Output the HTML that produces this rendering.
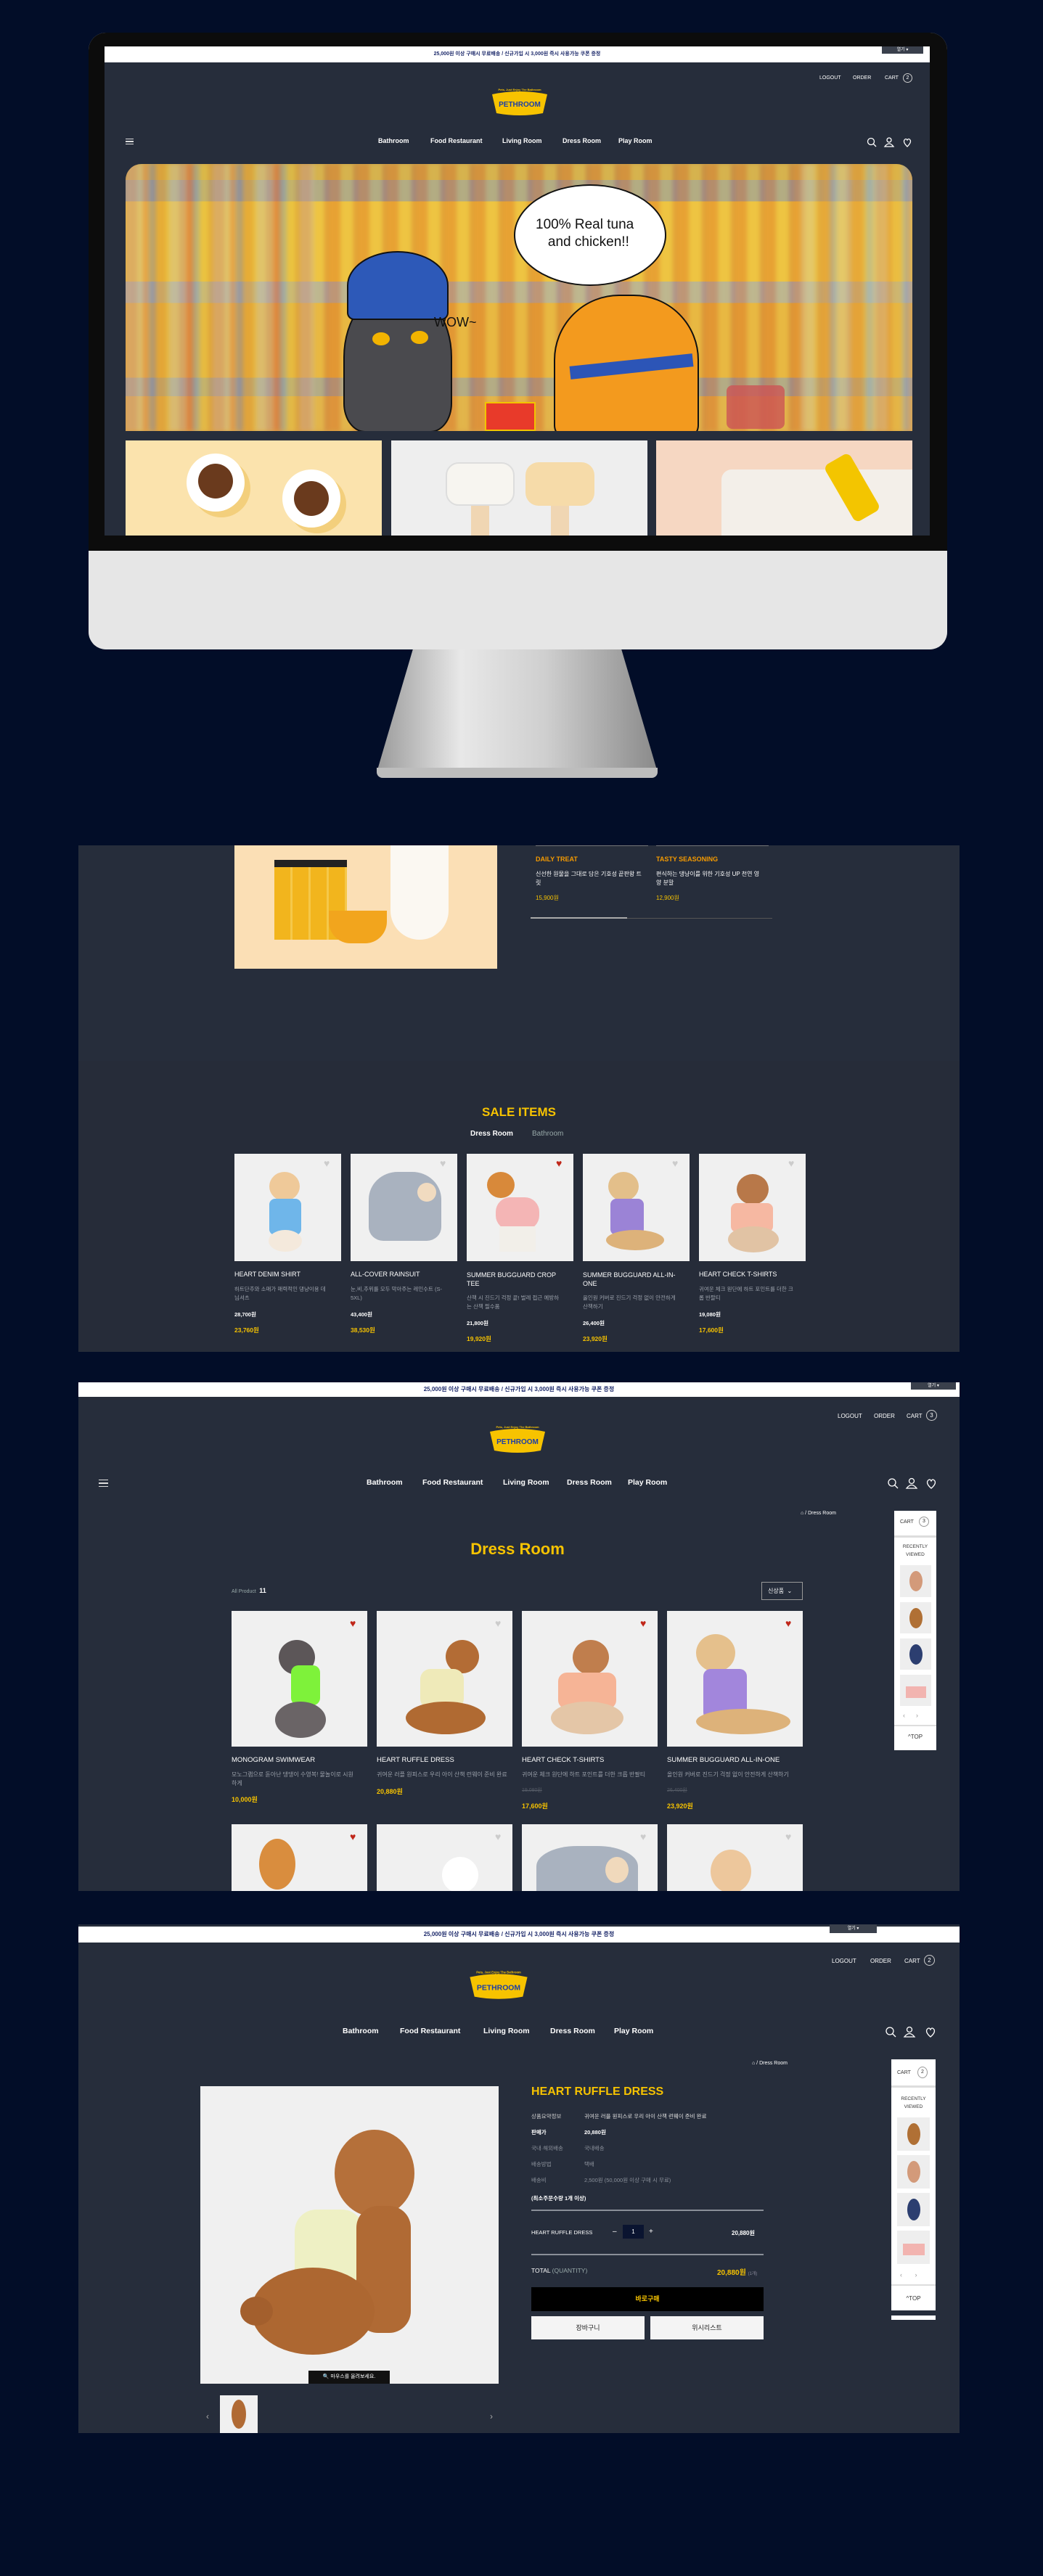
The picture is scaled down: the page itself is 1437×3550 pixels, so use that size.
<!DOCTYPE html>
<html><head><meta charset="utf-8">
<style>
*{margin:0;padding:0;box-sizing:border-box}
body{width:1437px;height:3550px;background:#020d28;position:relative;overflow:hidden;font-family:"Liberation Sans","Noto Sans CJK KR",sans-serif;color:#fff}
.a{position:absolute}
.panel{background:#262d3b}
.wbar{background:#fff;color:#1d2a6b;font-size:8px;text-align:center;font-weight:bold}
.nav span{position:absolute;font-weight:bold;white-space:nowrap}
.t{position:absolute;white-space:nowrap}
.y{color:#f7c300}
.card{position:absolute;background:#f0f0f0;overflow:hidden}
.dog{position:absolute;border-radius:50%}
.heart{position:absolute;font-size:14px;line-height:1}
.k{font-family:"Liberation Sans","Noto Sans CJK KR",sans-serif}
</style></head><body>

<!-- ============ SECTION 1: MONITOR ============ -->
<div class="a" style="left:519px;top:880px;width:387px;height:192px;background:linear-gradient(90deg,#9a9a9a,#e8e8e8 30%,#cfcfcf 60%,#8a8a8a);clip-path:polygon(14% 0,86% 0,100% 96%,0 96%);border-radius:0 0 10px 10px"></div>
<div class="a" style="left:519px;top:1058px;width:387px;height:14px;background:#bdbdbd;border-radius:0 0 8px 8px"></div>
<div class="a" style="left:122px;top:45px;width:1183px;height:850px;background:#e6e6e6;border-radius:24px;"></div>
<div class="a" style="left:122px;top:45px;width:1183px;height:714px;background:#0c0c0c;border-radius:24px 24px 0 0"></div>
<div class="a" style="left:144px;top:64px;width:1137px;height:674px;background:#262d3b;overflow:hidden">
  <div class="a wbar" style="left:0;top:0;width:1137px;height:22px;line-height:22px;font-size:7px">25,000원 이상 구매시 무료배송 / 신규가입 시 3,000원 즉시 사용가능 쿠폰 증정</div>
  <div class="a" style="left:1071px;top:0;width:57px;height:10px;background:#3a404c;font-size:6px;text-align:center;line-height:10px">열기 ▾</div>
  <div class="t" style="left:985px;top:40px;font-size:7px">LOGOUT</div>
  <div class="t" style="left:1031px;top:40px;font-size:7px">ORDER</div>
  <div class="t" style="left:1075px;top:40px;font-size:7px">CART</div>
  <div class="a" style="left:1100px;top:37px;width:13px;height:13px;border:1px solid #ccc;border-radius:50%;font-size:7px;text-align:center;line-height:11px">2</div>
  <svg class="a" style="left:530px;top:52px" width="84" height="48" viewBox="0 0 84 48"><path d="M4 14 Q42 6 80 14 L74 40 Q42 46 10 40 Z" fill="#f7c300"/><text x="42" y="31" font-size="10" font-weight="bold" fill="#1b3ea8" text-anchor="middle" font-family="Liberation Sans">PETHROOM</text><text x="42" y="9" font-size="4" font-weight="bold" fill="#f7c300" text-anchor="middle" font-family="Liberation Sans">Pets, Just Enjoy The Bathroom</text></svg>
  <div class="a" style="left:29px;top:127px;width:11px;height:8px;border-top:1.5px solid #ddd;border-bottom:1.5px solid #ddd"></div>
  <div class="a" style="left:29px;top:130px;width:11px;height:1.5px;background:#ddd"></div>
  <div class="nav" style="font-size:9px">
   <span style="left:377px;top:125px">Bathroom</span><span style="left:449px;top:125px">Food Restaurant</span><span style="left:548px;top:125px">Living Room</span><span style="left:631px;top:125px">Dress Room</span><span style="left:708px;top:125px">Play Room</span>
  </div>
  <svg class="a" style="left:1050px;top:125px" width="70" height="14" viewBox="0 0 70 14" fill="none" stroke="#fff" stroke-width="1.3"><circle cx="6" cy="6" r="4.5"/><path d="M9 9l4 4"/><circle cx="31" cy="4" r="3"/><path d="M25 13q6-8 12 0z"/><path d="M56 4q-2-3-4 0-2 3 4 9 6-6 4-9-2-3-4 0z"/></svg>
  <!-- hero -->
  <div class="a" style="left:29px;top:162px;width:1084px;height:368px;border-radius:22px 22px 0 0;overflow:hidden;background:
    linear-gradient(180deg,#c9a24a 0 6%,#9a9890 6% 14%,#e8b93a 14% 44%,#a9a7a0 44% 52%,#e0a83a 52% 80%,#9b9993 80% 87%,#d9a446 87%)">
    <div class="a" style="left:0;top:0;width:1084px;height:368px;background:repeating-linear-gradient(90deg,rgba(230,120,40,.35) 0 16px,rgba(255,230,90,.25) 16px 34px,rgba(200,60,40,.18) 34px 40px);filter:blur(3px)"></div>
    <div class="a" style="left:0;top:0;width:260px;height:368px;background:repeating-linear-gradient(90deg,#c9c3b5 0 24px,#d96a4a 24px 32px,#6f9fcf 32px 42px,#e6c23e 42px 60px);opacity:.35;filter:blur(3px)"></div>
    <div class="a" style="left:930px;top:0;width:154px;height:368px;background:repeating-linear-gradient(90deg,#d8cfa2 0 20px,#e7b540 20px 40px,#8fb7d8 40px 50px);opacity:.4;filter:blur(3px)"></div>
    <div class="a" style="left:535px;top:28px;width:210px;height:140px;background:#fff;border:2px solid #111;border-radius:50%"></div>
    <div class="t" style="left:565px;top:72px;font-size:19px;color:#111;text-align:center;line-height:24px">100% Real tuna<br>&nbsp;&nbsp;and chicken!!</div>
    <!-- grey cat -->
    <div class="a" style="left:300px;top:170px;width:150px;height:200px;background:#4a4a4e;border-radius:48% 48% 20% 20%;border:2px solid #111"></div>
    <div class="a" style="left:305px;top:120px;width:140px;height:95px;background:#2d59b8;border-radius:50% 50% 10px 10px;border:2px solid #111"></div>
    <div class="a" style="left:340px;top:232px;width:24px;height:18px;background:#f2b300;border-radius:50%"></div>
    <div class="a" style="left:393px;top:230px;width:24px;height:18px;background:#f2b300;border-radius:50%"></div>
    <div class="t" style="left:425px;top:208px;font-size:18px;color:#111">WOW~</div>
    <!-- orange cat -->
    <div class="a" style="left:590px;top:180px;width:200px;height:200px;background:#f39a1e;border-radius:45% 45% 10% 10%;border:2px solid #111"></div>
    <div class="a" style="left:612px;top:270px;width:170px;height:18px;background:#2c55b7;transform:rotate(-6deg)"></div>
    <div class="a" style="left:495px;top:328px;width:70px;height:40px;background:#e83a2a;border:2px solid #f2c400"></div>
    <div class="a" style="left:828px;top:305px;width:80px;height:60px;background:#c55;border-radius:8px;opacity:.8"></div>
  </div>
  <!-- three tiles -->
  <div class="a" style="left:29px;top:543px;width:353px;height:131px;background:#fbe3ad">
    <div class="dog" style="left:84px;top:18px;width:80px;height:80px;background:#fff;box-shadow:8px 8px 0 #f3cf7c"></div><div class="dog" style="left:100px;top:32px;width:48px;height:48px;background:#6a3a1d"></div>
    <div class="dog" style="left:216px;top:40px;width:80px;height:80px;background:#fff;box-shadow:8px 8px 0 #f3cf7c"></div><div class="dog" style="left:232px;top:56px;width:48px;height:48px;background:#6a3a1d"></div>
  </div>
  <div class="a" style="left:395px;top:543px;width:353px;height:131px;background:#eeeeee">
    <div class="a" style="left:75px;top:30px;width:95px;height:60px;background:#f7f5f0;border-radius:18px;border:2px solid #ddd"></div>
    <div class="a" style="left:185px;top:30px;width:95px;height:60px;background:#f6dba9;border-radius:18px"></div>
    <div class="a" style="left:110px;top:90px;width:25px;height:41px;background:#f0d6b3"></div><div class="a" style="left:220px;top:90px;width:25px;height:41px;background:#f0d6b3"></div>
  </div>
  <div class="a" style="left:760px;top:543px;width:353px;height:131px;background:#f6d7c2">
    <div class="a" style="left:90px;top:40px;width:263px;height:91px;background:#f3efe9;border-radius:14px 0 0 0"></div>
    <div class="a" style="left:250px;top:20px;width:40px;height:90px;background:#f3c500;border-radius:8px;transform:rotate(-30deg)"></div>
  </div>
</div>

<!-- ============ SECTION 2 ============ -->
<div class="a panel" style="left:108px;top:1165px;width:1214px;height:698px">
  <div class="a" style="left:0;top:297px;width:1214px;height:401px;background:#262c39"></div>
  <div class="a" style="left:215px;top:0;width:362px;height:170px;background:#fbdfb5">
    <div class="a" style="left:55px;top:20px;width:100px;height:110px;background:repeating-linear-gradient(90deg,#f2b51d 0 22px,#f5c84a 22px 25px)"></div>
    <div class="a" style="left:55px;top:20px;width:100px;height:10px;background:#222"></div>
    <div class="a" style="left:130px;top:90px;width:80px;height:45px;background:#f2a51d;border-radius:0 0 30px 30px"></div>
    <div class="a" style="left:215px;top:0;width:80px;height:130px;background:#fbf8f2;border-radius:0 0 40px 40px"></div>
  </div>
  <div class="a" style="left:630px;top:0;width:155px;height:1px;background:#777"></div>
  <div class="a" style="left:796px;top:0;width:155px;height:1px;background:#777"></div>
  <div class="t" style="left:630px;top:14px;font-size:9px;font-weight:bold;color:#f59a00">DAILY TREAT</div>
  <div class="t" style="left:796px;top:14px;font-size:9px;font-weight:bold;color:#f59a00">TASTY SEASONING</div>
  <div class="t k" style="left:630px;top:34px;font-size:8px;line-height:12px">신선한 원물을 그대로 담은 기호성 끝판왕 트<br>릿</div>
  <div class="t k" style="left:796px;top:34px;font-size:8px;line-height:12px">편식하는 댕냥이를 위한 기호성 UP 천연 영<br>양 분말</div>
  <div class="t y" style="left:630px;top:67px;font-size:8px">15,900원</div>
  <div class="t y" style="left:796px;top:67px;font-size:8px">12,900원</div>
  <div class="a" style="left:623px;top:100px;width:333px;height:1px;background:#555"></div>
  <div class="a" style="left:623px;top:99px;width:133px;height:2px;background:#aaa"></div>
  <div class="t y" style="left:0;width:1214px;text-align:center;top:358px;font-size:17px;font-weight:bold">SALE ITEMS</div>
  <div class="t" style="left:540px;top:392px;font-size:10px;font-weight:bold">Dress Room</div>
  <div class="t" style="left:625px;top:392px;font-size:10px;color:#9aa">Bathroom</div>
</div>
<!-- sale cards -->
<div class="card" style="left:323px;top:1590px;width:147px;height:148px"><div class="dog" style="left:48px;top:25px;width:42px;height:40px;background:#efc999"></div><div class="a" style="left:48px;top:62px;width:44px;height:50px;background:#6fb6ea;border-radius:8px"></div><div class="dog" style="left:47px;top:105px;width:46px;height:30px;background:#f4e9dc"></div><div class="heart" style="left:123px;top:6px;color:#ccc">♥</div></div>
<div class="card" style="left:483px;top:1590px;width:147px;height:148px"><div class="a" style="left:25px;top:25px;width:100px;height:95px;background:#a9b2bf;border-radius:40% 40% 20% 20%"></div><div class="dog" style="left:92px;top:40px;width:26px;height:26px;background:#f1dbc0"></div><div class="heart" style="left:123px;top:6px;color:#ccc">♥</div></div>
<div class="card" style="left:643px;top:1590px;width:147px;height:148px"><div class="dog" style="left:28px;top:25px;width:38px;height:36px;background:#d8893a"></div><div class="a" style="left:40px;top:60px;width:60px;height:45px;background:#f4b5b5;border-radius:20px"></div><div class="a" style="left:45px;top:100px;width:50px;height:35px;background:#f2efe9"></div><div class="heart" style="left:123px;top:6px;color:#c0271a">♥</div></div>
<div class="card" style="left:803px;top:1590px;width:147px;height:148px"><div class="dog" style="left:35px;top:25px;width:42px;height:40px;background:#e3bf8a"></div><div class="a" style="left:38px;top:62px;width:46px;height:50px;background:#9b83d6;border-radius:8px"></div><div class="dog" style="left:32px;top:105px;width:80px;height:28px;background:#ddb27a"></div><div class="heart" style="left:123px;top:6px;color:#ccc">♥</div></div>
<div class="card" style="left:963px;top:1590px;width:147px;height:148px"><div class="dog" style="left:52px;top:28px;width:44px;height:42px;background:#b87849"></div><div class="a" style="left:44px;top:68px;width:58px;height:40px;background:#f6b8a2;border-radius:8px"></div><div class="dog" style="left:40px;top:100px;width:70px;height:36px;background:#e1c3a4"></div><div class="heart" style="left:123px;top:6px;color:#ccc">♥</div></div>
<div class="a" style="top:1751px;left:0;width:1437px;font-size:9px">
 <div class="t" style="left:323px">HEART DENIM SHIRT</div><div class="t" style="left:483px">ALL-COVER RAINSUIT</div><div class="t" style="left:643px;line-height:12px">SUMMER BUGGUARD CROP<br>TEE</div><div class="t" style="left:803px;line-height:12px">SUMMER BUGGUARD ALL-IN-<br>ONE</div><div class="t" style="left:963px">HEART CHECK T-SHIRTS</div>
</div>
<div class="a k" style="top:1771px;left:0;width:1437px;font-size:7.5px;color:#9aa0aa;line-height:12px">
 <div class="t" style="left:323px">하트단추와 소매가 매력적인 댕냥이용 데<br>님셔츠</div><div class="t" style="left:483px">눈,비,추위를 모두 막아주는 레인수트 (S-<br>5XL)</div><div class="t" style="left:643px;top:12px">산책 시 진드기 걱정 끝! 벌레 접근 예방하<br>는 산책 필수품</div><div class="t" style="left:803px;top:12px">올인원 커버로 진드기 걱정 없이 안전하게<br>산책하기</div><div class="t" style="left:963px">귀여운 체크 원단에 하트 포인트를 더한 크<br>롭 반팔티</div>
</div>
<div class="a" style="top:1806px;left:0;width:1437px;font-size:7.5px;font-weight:bold;text-decoration:line-through">
 <div class="t" style="left:323px">28,700원</div><div class="t" style="left:483px">43,400원</div><div class="t" style="left:643px;top:12px">21,800원</div><div class="t" style="left:803px;top:12px">26,400원</div><div class="t" style="left:963px">19,080원</div>
</div>
<div class="a y" style="top:1827px;left:0;width:1437px;font-size:8.5px;font-weight:bold">
 <div class="t" style="left:323px">23,760원</div><div class="t" style="left:483px">38,530원</div><div class="t" style="left:643px;top:12px">19,920원</div><div class="t" style="left:803px;top:12px">23,920원</div><div class="t" style="left:963px">17,600원</div>
</div>

<!-- ============ SECTION 3 ============ -->
<div class="a panel" style="left:108px;top:1905px;width:1214px;height:701px;overflow:hidden">
  <div class="a wbar" style="left:0;top:0;width:1214px;height:20px;line-height:20px">25,000원 이상 구매시 무료배송 / 신규가입 시 3,000원 즉시 사용가능 쿠폰 증정</div>
  <div class="a" style="left:1147px;top:0;width:62px;height:10px;background:#3a404c;font-size:6px;text-align:center;line-height:10px">열기 ▾</div>
  <div class="t" style="left:1046px;top:42px;font-size:8px">LOGOUT</div>
  <div class="t" style="left:1096px;top:42px;font-size:8px">ORDER</div>
  <div class="t" style="left:1141px;top:42px;font-size:8px">CART</div>
  <div class="a" style="left:1168px;top:38px;width:15px;height:15px;border:1px solid #ccc;border-radius:50%;font-size:8px;text-align:center;line-height:13px">3</div>
  <svg class="a" style="left:560px;top:54px" width="90" height="48" viewBox="0 0 84 48"><path d="M4 14 Q42 6 80 14 L74 40 Q42 46 10 40 Z" fill="#f7c300"/><text x="42" y="31" font-size="10" font-weight="bold" fill="#1b3ea8" text-anchor="middle" font-family="Liberation Sans">PETHROOM</text><text x="42" y="9" font-size="4" font-weight="bold" fill="#f7c300" text-anchor="middle" font-family="Liberation Sans">Pets, Just Enjoy The Bathroom</text></svg>
  <div class="a" style="left:28px;top:134px;width:13px;height:10px;border-top:1.5px solid #ddd;border-bottom:1.5px solid #ddd"></div>
  <div class="a" style="left:28px;top:138px;width:13px;height:1.5px;background:#ddd"></div>
  <div class="nav" style="font-size:10.5px">
   <span style="left:397px;top:132px">Bathroom</span><span style="left:474px;top:132px">Food Restaurant</span><span style="left:585px;top:132px">Living Room</span><span style="left:673px;top:132px">Dress Room</span><span style="left:757px;top:132px">Play Room</span>
  </div>
  <svg class="a" style="left:1114px;top:131px" width="70" height="16" viewBox="0 0 70 16" fill="none" stroke="#fff" stroke-width="1.3"><circle cx="7" cy="7" r="5"/><path d="M10.5 10.5l4.5 4.5"/><circle cx="34" cy="5" r="3.5"/><path d="M27 15q7-9 14 0z"/><path d="M61 5q-2-4-5 0-2 4 5 10 7-6 5-10-3-4-5 0z"/></svg>
  <div class="t" style="left:995px;top:177px;font-size:7px">⌂ / Dress Room</div>
  <div class="t y" style="left:0;width:1210px;text-align:center;top:217px;font-size:22px;font-weight:bold">Dress Room</div>
  <div class="t" style="left:211px;top:282px;font-size:7px;color:#9aa">All Product <b style="color:#fff;font-size:9px">&nbsp;11</b></div>
  <div class="a" style="left:941px;top:275px;width:57px;height:25px;border:1px solid #999;font-size:8px;line-height:23px;padding-left:8px" >신상품 &nbsp;⌄</div>
</div>
<div class="card" style="left:319px;top:2220px;width:187px;height:187px"><div class="dog" style="left:65px;top:40px;width:50px;height:48px;background:#5c5658"></div><div class="a" style="left:82px;top:75px;width:40px;height:55px;background:#7ef23a;border-radius:10px"></div><div class="dog" style="left:60px;top:125px;width:70px;height:50px;background:#6a6466"></div><div class="heart" style="left:163px;top:10px;color:#c0271a">♥</div></div>
<div class="card" style="left:519px;top:2220px;width:187px;height:187px"><div class="dog" style="left:95px;top:40px;width:46px;height:46px;background:#b36c35"></div><div class="a" style="left:60px;top:80px;width:60px;height:55px;background:#efeab9;border-radius:14px"></div><div class="dog" style="left:40px;top:125px;width:110px;height:45px;background:#b06a32"></div><div class="heart" style="left:163px;top:10px;color:#ccc">♥</div></div>
<div class="card" style="left:719px;top:2220px;width:187px;height:187px"><div class="dog" style="left:70px;top:40px;width:50px;height:48px;background:#c07e4d"></div><div class="a" style="left:50px;top:85px;width:80px;height:50px;background:#f6b496;border-radius:12px"></div><div class="dog" style="left:40px;top:125px;width:100px;height:45px;background:#e4c6a7"></div><div class="heart" style="left:163px;top:10px;color:#c0271a">♥</div></div>
<div class="card" style="left:919px;top:2220px;width:187px;height:187px"><div class="dog" style="left:40px;top:32px;width:54px;height:52px;background:#e5c08c"></div><div class="a" style="left:50px;top:80px;width:60px;height:70px;background:#a286dc;border-radius:10px"></div><div class="dog" style="left:40px;top:135px;width:130px;height:35px;background:#ddb27a"></div><div class="heart" style="left:163px;top:10px;color:#c0271a">♥</div></div>
<div class="a" style="top:2420px;left:0;width:1437px;font-size:9.5px">
 <div class="t" style="left:319px">MONOGRAM SWIMWEAR</div><div class="t" style="left:519px">HEART RUFFLE DRESS</div><div class="t" style="left:719px">HEART CHECK T-SHIRTS</div><div class="t" style="left:919px">SUMMER BUGGUARD ALL-IN-ONE</div>
</div>
<div class="a k" style="top:2440px;left:0;width:1437px;font-size:8px;color:#9aa0aa;line-height:12px">
 <div class="t" style="left:319px">모노그램으로 돋아난 댕댕이 수영복! 물놀이로 시원<br>하게</div><div class="t" style="left:519px">귀여운 러플 원피스로 우리 아이 산책 런웨이 준비 완료</div><div class="t" style="left:719px">귀여운 체크 원단에 하트 포인트를 더한 크롭 반팔티</div><div class="t" style="left:919px">올인원 커버로 진드기 걱정 없이 안전하게 산책하기</div>
</div>
<div class="t" style="left:719px;top:2462px;font-size:7px;color:#555b66;text-decoration:line-through">19,080원</div>
<div class="t" style="left:919px;top:2462px;font-size:7px;color:#555b66;text-decoration:line-through">26,400원</div>
<div class="t y" style="left:319px;top:2473px;font-size:9px;font-weight:bold">10,000원</div>
<div class="t y" style="left:519px;top:2462px;font-size:9px;font-weight:bold">20,880원</div>
<div class="t y" style="left:719px;top:2482px;font-size:9px;font-weight:bold">17,600원</div>
<div class="t y" style="left:919px;top:2482px;font-size:9px;font-weight:bold">23,920원</div>
<div class="card" style="left:319px;top:2514px;width:187px;height:92px"><div class="dog" style="left:38px;top:20px;width:50px;height:70px;background:#d98d3e"></div><div class="heart" style="left:163px;top:10px;color:#c0271a">♥</div></div>
<div class="card" style="left:519px;top:2514px;width:187px;height:92px"><div class="dog" style="left:90px;top:45px;width:50px;height:50px;background:#fff"></div><div class="heart" style="left:163px;top:10px;color:#ccc">♥</div></div>
<div class="card" style="left:719px;top:2514px;width:187px;height:92px"><div class="a" style="left:20px;top:30px;width:140px;height:70px;background:#a9b2bf;border-radius:40% 40% 0 0"></div><div class="dog" style="left:115px;top:45px;width:32px;height:36px;background:#f0d9bc"></div><div class="heart" style="left:163px;top:10px;color:#ccc">♥</div></div>
<div class="card" style="left:919px;top:2514px;width:187px;height:92px"><div class="dog" style="left:60px;top:35px;width:56px;height:60px;background:#edc79c"></div><div class="heart" style="left:163px;top:10px;color:#ccc">♥</div></div>
<!-- sidebar 3 -->
<div class="a" style="left:1232px;top:2082px;width:58px;height:330px;background:#fff;color:#333">
  <div class="t" style="left:8px;top:12px;font-size:7px">CART</div><div class="a" style="left:34px;top:8px;width:14px;height:14px;border:1px solid #999;border-radius:50%;font-size:7px;text-align:center;line-height:12px">3</div>
  <div class="a" style="left:0;top:34px;width:58px;height:3px;background:#ddd"></div>
  <div class="t" style="left:0;width:58px;text-align:center;top:44px;font-size:6.5px;line-height:11px">RECENTLY<br>VIEWED</div>
  <div class="a" style="left:8px;top:75px;width:43px;height:44px;background:#eee"><div class="dog" style="left:13px;top:8px;width:18px;height:28px;background:#d39a7a"></div></div>
  <div class="a" style="left:8px;top:126px;width:43px;height:43px;background:#eee"><div class="dog" style="left:13px;top:8px;width:18px;height:28px;background:#b07035"></div></div>
  <div class="a" style="left:8px;top:176px;width:43px;height:43px;background:#eee"><div class="dog" style="left:13px;top:8px;width:18px;height:28px;background:#2c3e70"></div></div>
  <div class="a" style="left:8px;top:226px;width:43px;height:43px;background:#eee"><div class="a" style="left:8px;top:16px;width:28px;height:16px;background:#f2b4b0"></div></div>
  <div class="t" style="left:12px;top:277px;font-size:9px;color:#999">‹ &nbsp;&nbsp;&nbsp;&nbsp; ›</div>
  <div class="a" style="left:0;top:295px;width:58px;height:2px;background:#ddd"></div>
  <div class="t" style="left:0;width:58px;text-align:center;top:307px;font-size:8px">^TOP</div>
</div>

<!-- ============ SECTION 4 ============ -->
<div class="a panel" style="left:108px;top:2652px;width:1214px;height:701px;overflow:hidden">
  <div class="a wbar" style="left:0;top:3px;width:1214px;height:22px;line-height:22px">25,000원 이상 구매시 무료배송 / 신규가입 시 3,000원 즉시 사용가능 쿠폰 증정</div>
  <div class="a" style="left:1035px;top:0;width:65px;height:12px;background:#3a404c;font-size:6px;text-align:center;line-height:12px">열기 ▾</div>
  <div class="t" style="left:1038px;top:46px;font-size:8px">LOGOUT</div>
  <div class="t" style="left:1091px;top:46px;font-size:8px">ORDER</div>
  <div class="t" style="left:1138px;top:46px;font-size:8px">CART</div>
  <div class="a" style="left:1165px;top:42px;width:15px;height:15px;border:1px solid #ccc;border-radius:50%;font-size:8px;text-align:center;line-height:13px">2</div>
  <svg class="a" style="left:531px;top:58px" width="96" height="50" viewBox="0 0 84 48"><path d="M4 14 Q42 6 80 14 L74 40 Q42 46 10 40 Z" fill="#f7c300"/><text x="42" y="31" font-size="10" font-weight="bold" fill="#1b3ea8" text-anchor="middle" font-family="Liberation Sans">PETHROOM</text><text x="42" y="9" font-size="4" font-weight="bold" fill="#f7c300" text-anchor="middle" font-family="Liberation Sans">Pets, Just Enjoy The Bathroom</text></svg>
  <div class="nav" style="font-size:10.5px">
   <span style="left:364px;top:141px">Bathroom</span><span style="left:443px;top:141px">Food Restaurant</span><span style="left:558px;top:141px">Living Room</span><span style="left:650px;top:141px">Dress Room</span><span style="left:738px;top:141px">Play Room</span>
  </div>
  <svg class="a" style="left:1111px;top:140px" width="72" height="16" viewBox="0 0 72 16" fill="none" stroke="#fff" stroke-width="1.3"><circle cx="7" cy="7" r="5"/><path d="M10.5 10.5l4.5 4.5"/><circle cx="34" cy="5" r="3.5"/><path d="M27 15q7-9 14 0z"/><path d="M63 5q-2-4-5 0-2 4 5 10 7-6 5-10-3-4-5 0z"/></svg>
  <div class="t" style="left:928px;top:188px;font-size:7px">⌂ / Dress Room</div>
  <!-- image -->
  <div class="a" style="left:168px;top:223px;width:411px;height:410px;background:#f0f0f0;overflow:hidden">
    <div class="dog" style="left:185px;top:60px;width:110px;height:120px;background:#b5703a"></div>
    <div class="a" style="left:130px;top:170px;width:95px;height:125px;background:#eef0c4;border-radius:30px"></div>
    <div class="a" style="left:215px;top:165px;width:75px;height:175px;background:#b06a34;border-radius:30px"></div>
    <div class="dog" style="left:70px;top:250px;width:170px;height:120px;background:#ad6731"></div>
    <div class="dog" style="left:55px;top:290px;width:45px;height:40px;background:#a35f2d"></div>
    <div class="a" style="left:149px;top:392px;width:112px;height:18px;background:#111;font-size:7px;line-height:18px;text-align:center">🔍 마우스를 올려보세요.</div>
  </div>
  <div class="t" style="left:176px;top:671px;font-size:12px;color:#aaa">‹</div>
  <div class="t" style="left:567px;top:671px;font-size:12px;color:#aaa">›</div>
  <div class="a" style="left:195px;top:649px;width:52px;height:52px;background:#f0f0f0"><div class="dog" style="left:16px;top:6px;width:20px;height:40px;background:#b06a34"></div></div>
  <!-- info -->
  <div class="t y" style="left:624px;top:222px;font-size:16px;font-weight:bold">HEART RUFFLE DRESS</div>
  <div class="k" style="position:absolute;left:624px;top:254px;font-size:7.5px;line-height:22px;color:#ccc">
    <div>상품요약정보</div><div style="color:#fff;font-weight:bold">판매가</div><div style="color:#8a909a">국내·해외배송</div><div style="color:#8a909a">배송방법</div><div style="color:#8a909a">배송비</div>
  </div>
  <div class="k" style="position:absolute;left:697px;top:254px;font-size:7.5px;line-height:22px;color:#ddd">
    <div>귀여운 러플 원피스로 우리 아이 산책 런웨이 준비 완료</div><div style="color:#fff;font-weight:bold">20,880원</div><div style="color:#8a909a">국내배송</div><div style="color:#8a909a">택배</div><div style="color:#8a909a">2,500원 (50,000원 이상 구매 시 무료)</div>
  </div>
  <div class="t k" style="left:624px;top:372px;font-size:7.5px;font-weight:bold">(최소주문수량 1개 이상)</div>
  <div class="a" style="left:624px;top:393px;width:320px;height:2px;background:#8a8f98"></div>
  <div class="t" style="left:624px;top:420px;font-size:7.5px">HEART RUFFLE DRESS</div>
  <div class="t" style="left:736px;top:418px;font-size:10px">–</div>
  <div class="a" style="left:750px;top:414px;width:29px;height:19px;background:#0a1430;font-size:8px;text-align:center;line-height:19px">1</div>
  <div class="t" style="left:786px;top:418px;font-size:10px">+</div>
  <div class="t" style="left:900px;top:420px;font-size:8px;font-weight:bold">20,880원</div>
  <div class="a" style="left:624px;top:454px;width:320px;height:2px;background:#8a8f98"></div>
  <div class="t" style="left:624px;top:472px;font-size:8.5px">TOTAL <span style="color:#9aa">(QUANTITY)</span></div>
  <div class="t y" style="left:880px;top:471px;font-size:10px;font-weight:bold">20,880원 <span style="font-size:6px;color:#889;font-weight:normal">(1개)</span></div>
  <div class="a y k" style="left:624px;top:500px;width:320px;height:33px;background:#000;font-size:9px;font-weight:bold;text-align:center;line-height:33px">바로구매</div>
  <div class="a k" style="left:624px;top:540px;width:156px;height:32px;background:#f4f4f4;color:#222;font-size:9px;text-align:center;line-height:32px">장바구니</div>
  <div class="a k" style="left:788px;top:540px;width:156px;height:32px;background:#f4f4f4;color:#222;font-size:9px;text-align:center;line-height:32px">위시리스트</div>
</div>
<!-- sidebar 4 -->
<div class="a" style="left:1228px;top:2838px;width:61px;height:346px;background:#fff;color:#333">
  <div class="t" style="left:8px;top:15px;font-size:7px">CART</div><div class="a" style="left:36px;top:10px;width:14px;height:16px;border:1px solid #999;border-radius:50%;font-size:7px;text-align:center;line-height:14px">2</div>
  <div class="a" style="left:0;top:36px;width:61px;height:3px;background:#ddd"></div>
  <div class="t" style="left:0;width:61px;text-align:center;top:49px;font-size:6.5px;line-height:11px">RECENTLY<br>VIEWED</div>
  <div class="a" style="left:8px;top:80px;width:45px;height:46px;background:#eee"><div class="dog" style="left:14px;top:8px;width:18px;height:30px;background:#b07035"></div></div>
  <div class="a" style="left:8px;top:132px;width:45px;height:46px;background:#eee"><div class="dog" style="left:14px;top:8px;width:18px;height:30px;background:#d39a7a"></div></div>
  <div class="a" style="left:8px;top:184px;width:45px;height:46px;background:#eee"><div class="dog" style="left:14px;top:8px;width:18px;height:30px;background:#2c3e70"></div></div>
  <div class="a" style="left:8px;top:236px;width:45px;height:46px;background:#eee"><div class="a" style="left:8px;top:18px;width:30px;height:16px;background:#f2b4b0"></div></div>
  <div class="t" style="left:12px;top:292px;font-size:9px;color:#999">‹ &nbsp;&nbsp;&nbsp;&nbsp;&nbsp; ›</div>
  <div class="a" style="left:0;top:310px;width:61px;height:2px;background:#ddd"></div>
  <div class="t" style="left:0;width:61px;text-align:center;top:325px;font-size:8px">^TOP</div>
</div>
<div class="a" style="left:1228px;top:3191px;width:61px;height:6px;background:#fff"></div>

</body></html>
